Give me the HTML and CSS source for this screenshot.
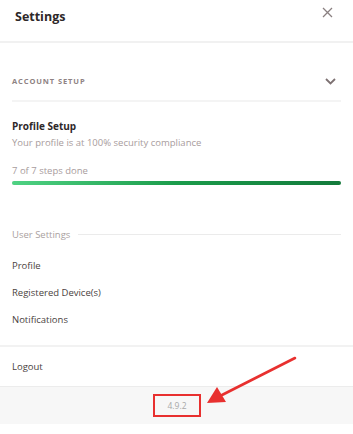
FILE: index.html
```html
<!DOCTYPE html>
<html lang="en">
<head>
    <meta charset="UTF-8">
    <meta name="viewport" content="width=device-width, initial-scale=1.0">
    <title>Settings</title>
    <link rel="stylesheet" href="styles.css">
</head>
<body>
    <div class="panel">
        <div class="header">
            <h1 class="title">Settings</h1>
            <button class="close-btn" aria-label="Close">
                <svg width="11" height="11" viewBox="0 0 11 11"><path d="M1 1L10 10M10 1L1 10" stroke="#8a8081" stroke-width="1.3" fill="none"/></svg>
            </button>
        </div>
        <div class="content">
            <div class="section-head">
                <span>ACCOUNT SETUP</span>
                <svg width="11" height="7" viewBox="0 0 11 7"><path d="M1 1L5.5 5.5L10 1" stroke="#7d7172" stroke-width="1.8" fill="none"/></svg>
            </div>
            <div class="setup">
                <div class="setup-title">Profile Setup</div>
                <div class="muted">Your profile is at 100% security compliance</div>
                <div class="muted steps">7 of 7 steps done</div>
                <div class="progress"><div class="progress-fill" style="width: 100%"></div></div>
            </div>
            <div class="group-label">
                <span>User Settings</span>
                <div class="group-line"></div>
            </div>
            <ul class="menu">
                <li>Profile</li>
                <li>Registered Device(s)</li>
                <li>Notifications</li>
            </ul>
        </div>
        <div class="logout">Logout</div>
        <div class="footer">
            <span class="version">4.9.2</span>
        </div>
        <!-- annotation arrow -->
        <svg class="arrow" width="353" height="434" viewBox="0 0 353 434">
            <line x1="295" y1="358" x2="222" y2="395" stroke="#e8302f" stroke-width="2.6" stroke-linecap="round"/>
            <polygon points="207,403 217,387 226,402" fill="#e8302f"/>
        </svg>
    </div>
</body>
</html>
```

FILE: styles.css
```css
body {
    margin: 0;
    font-family: 'Open Sans', 'Noto Sans', sans-serif;
    background-color: #ffffff;
}
.panel {
    position: relative;
    width: 353px;
    height: 434px;
    background-color: white;
}
.header {
    height: 41px;
    padding: 0 12px 0 15px;
    display: flex;
    align-items: center;
    justify-content: space-between;
    border-bottom: 2px solid #f1f1f1;
}
.title {
    margin: 0;
    font-size: 12.5px;
    font-weight: 700;
    color: #2e2829;
    margin-top: -9px;
}
.close-btn {
    border: none;
    background: none;
    padding: 0;
    margin-top: -17px;
    margin-right: 8px;
    cursor: pointer;
    display: flex;
}
.content {
    padding: 0 12px 0 12px;
}
.section-head {
    padding-top: 19px;
    height: 38px;
    display: flex;
    align-items: center;
    justify-content: space-between;
    border-bottom: 2px solid #f4f4f4;
    font-size: 7.5px;
    font-weight: 700;
    letter-spacing: 0.9px;
    color: #8e8283;
}
.section-head svg {
    margin-right: 5px;
}
.setup {
    padding-top: 16px;
}
.setup-title {
    font-size: 10px;
    font-weight: 700;
    line-height: 16px;
    color: #2e2829;
}
.muted {
    font-size: 9.5px;
    line-height: 17px;
    color: #a89c9d;
}
.steps {
    margin-top: 11px;
}
.progress {
    margin-top: 2px;
    height: 4px;
    border-radius: 2px;
    background-color: #e8e8e8;
}
.progress-fill {
    height: 100%;
    border-radius: 2px;
    background: linear-gradient(to right, #4fd283, #1b9c4b 50%, #137a3b);
}
.group-label {
    margin-top: 42px;
    display: flex;
    align-items: center;
    gap: 8px;
    font-size: 9.5px;
    line-height: 16px;
    color: #aa9fa0;
}
.group-line {
    flex: 1;
    height: 1px;
    background-color: #ebebeb;
    margin-top: -1px;
}
.menu {
    list-style: none;
    margin: 9px 0 0 0;
    padding: 0;
}
.menu li {
    font-size: 9.5px;
    line-height: 27px;
    color: #4a3f40;
}
.logout {
    margin-top: 12px;
    border-top: 2px solid #f2f2f2;
    padding: 0 12px;
    height: 39px;
    line-height: 39px;
    font-size: 9.5px;
    color: #4a3f40;
}
.footer {
    height: 37px;
    border-top: 1px solid #ececec;
    background-color: #f7f7f7;
    display: flex;
    align-items: center;
    justify-content: center;
}
.version {
    width: 44px;
    height: 19px;
    line-height: 19px;
    text-align: center;
    border: 2px solid #e8302f;
    font-size: 8.5px;
    color: #a8a8a8;
    margin-left: 1px;
}
.arrow {
    position: absolute;
    top: 0;
    left: 0;
    pointer-events: none;
}
```
